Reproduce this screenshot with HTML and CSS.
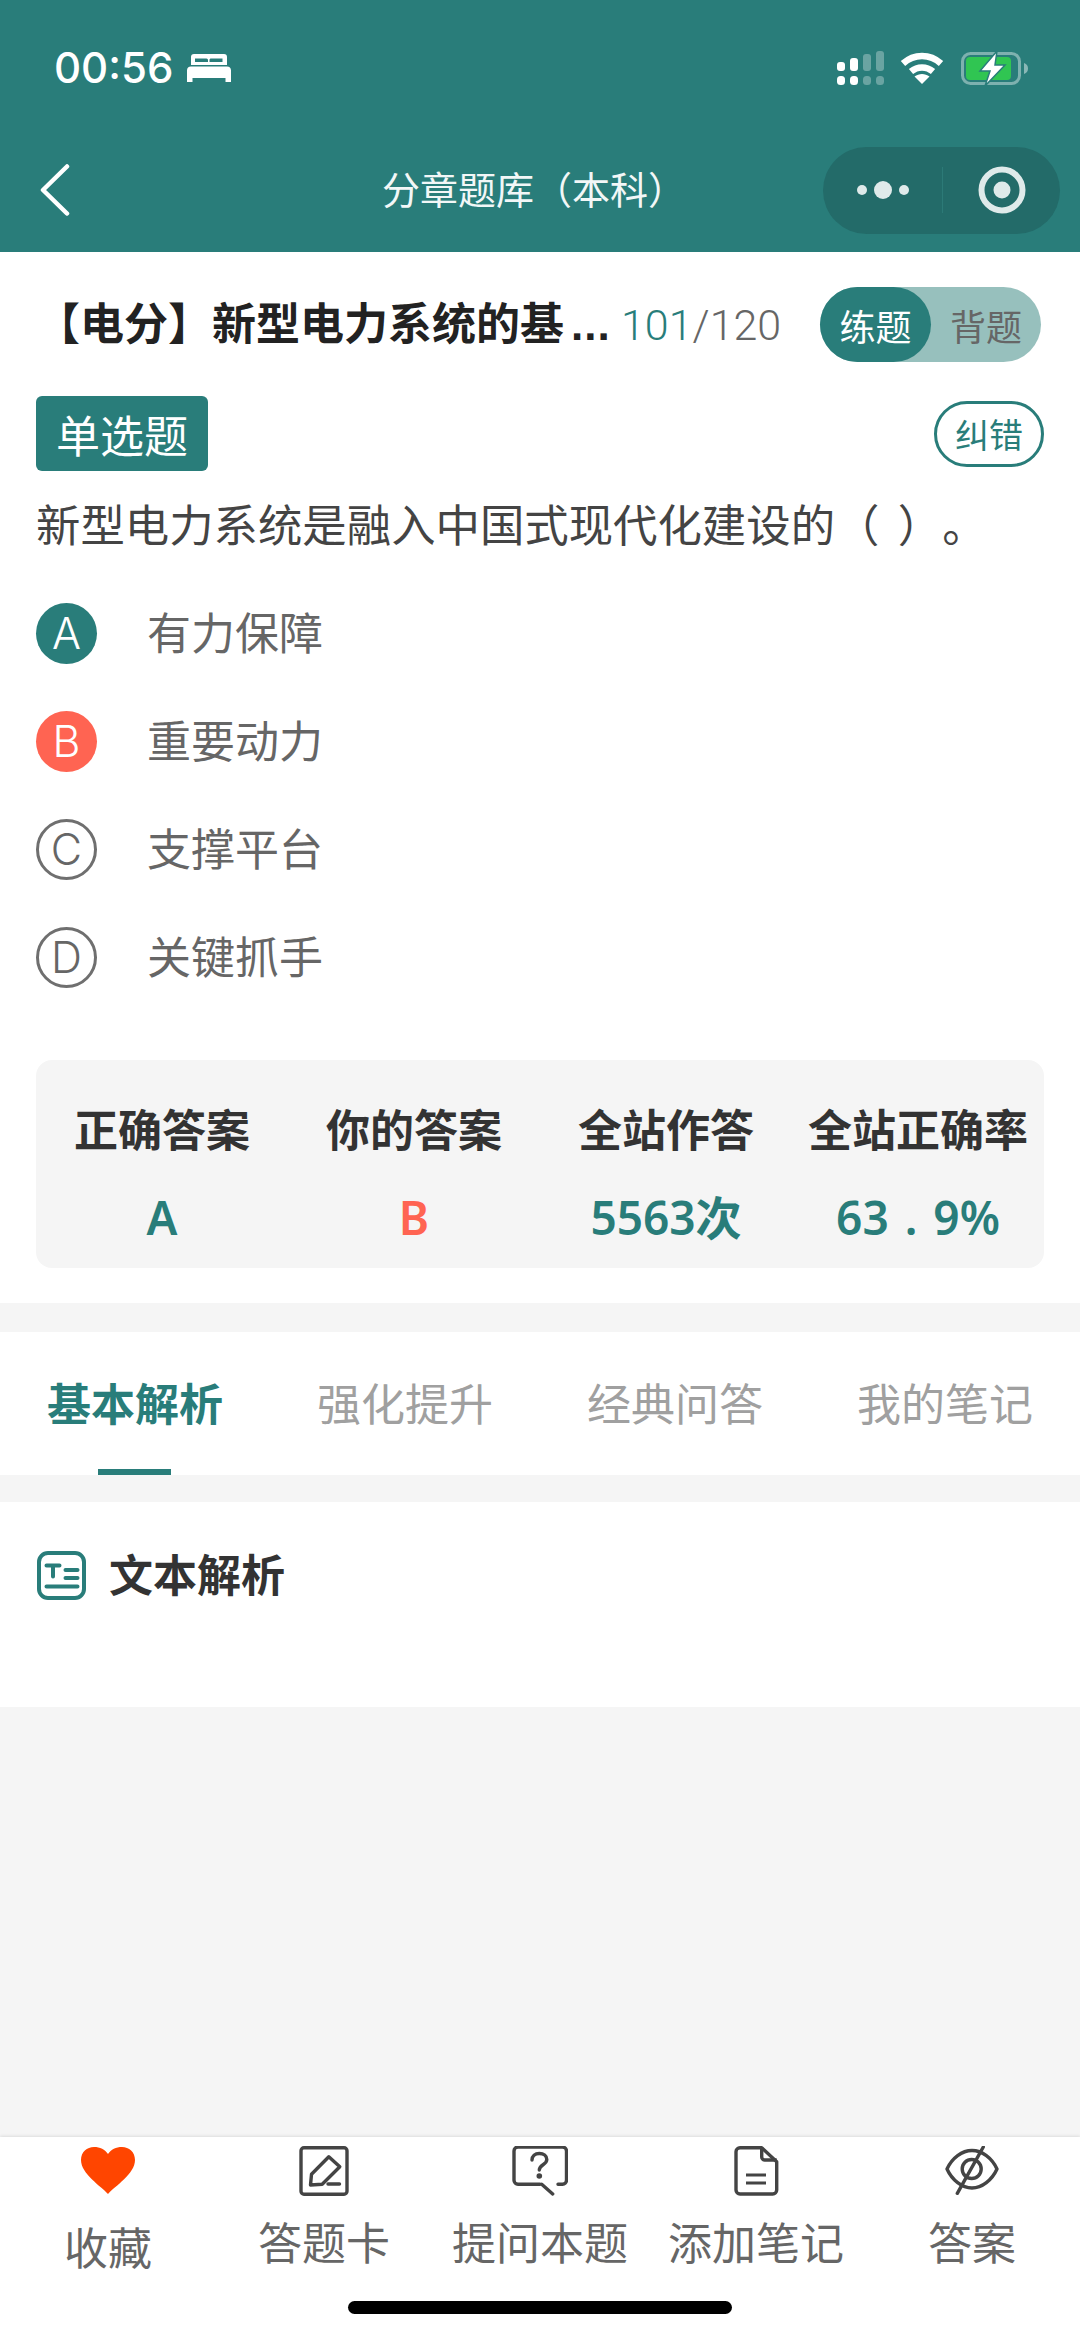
FILE: index.html
```html
<!DOCTYPE html>
<html lang="zh-CN">
<head>
<meta charset="utf-8">
<title>分章题库（本科）</title>
<link rel="stylesheet" href="styles.css">
</head>
<body>
<div class="page">
  <header class="header">
    <div class="status">
      <div class="status-left">
        <span class="time">00:56</span>
        <svg class="bed" viewBox="0 0 44 28"><path fill="#fff" fill-rule="evenodd" d="M7 0h30a3 3 0 0 1 3 3v8H4V3a3 3 0 0 1 3-3zM8 4.500v3.500h13V6a1.500 1.500 0 0 0-1.500-1.500zM23.500 4.500A1.500 1.500 0 0 0 22.500 6v2h13V4.500z"/><path fill="#fff" d="M4 12.500h36c2.500 0 4 1.500 4 4V28h-5.500v-4h-33v4H0V16.500c0-2.500 1.500-4 4-4z"/></svg>
      </div>
      <div class="status-right">
        <svg class="signal" viewBox="0 0 48 34">
          <g fill="#fff"><rect x="0" y="11" width="8" height="9" rx="3"/><rect x="13" y="7" width="8" height="13" rx="3"/><rect x="0" y="25" width="8" height="9" rx="3.500"/><rect x="13" y="25" width="8" height="9" rx="3.500"/></g>
          <g fill="#fff" opacity=".3"><rect x="26" y="3" width="8" height="17" rx="3"/><rect x="39" y="0" width="8" height="20" rx="3"/><rect x="26" y="25" width="8" height="9" rx="3.500"/><rect x="39" y="25" width="8" height="9" rx="3.500"/></g>
        </svg>
        <svg class="wifi" viewBox="0 0 44 32"><g fill="none" stroke="#fff" stroke-width="6.500"><path d="M3 11.500C14 1.500 30 1.500 41 11.500"/><path d="M11 19.500C17.500 14 26.500 14 33 19.500"/></g><path fill="#fff" d="M22 32l-7.500-7.500c4.500-3.500 10.500-3.500 15 0z"/></svg>
        <svg class="battery" viewBox="0 0 68 35">
          <rect x="1.500" y="2.500" width="57" height="30" rx="8" fill="none" stroke="#fff" stroke-opacity=".4" stroke-width="3"/>
          <path d="M63 12c3 1 4 3 4 5.500S66 22 63 23z" fill="#fff" opacity=".45"/>
          <rect x="5" y="6" width="45" height="23" rx="4" fill="#30c552"/>
          <path fill="#fff" stroke="#297d7a" stroke-width="1.500" d="M36 0L19 20h10l-5 15 20-21H34z"/>
        </svg>
      </div>
    </div>
    <div class="nav">
      <svg class="back" viewBox="0 0 30 52"><path fill="none" stroke="#fff" stroke-width="4.500" stroke-linecap="round" stroke-linejoin="round" d="M27 2.500L3 26l24 23.500"/></svg>
      <h1 class="nav-title">分章题库（本科）</h1>
      <div class="capsule">
        <svg class="dots" viewBox="0 0 52 20"><circle cx="5" cy="10" r="5" fill="#dfeaea"/><circle cx="26" cy="10" r="9" fill="#dfeaea"/><circle cx="47" cy="10" r="5" fill="#dfeaea"/></svg>
        <span class="capsule-line"></span>
        <svg class="target" viewBox="0 0 48 48"><circle cx="24" cy="24" r="20.500" fill="none" stroke="#dfeaea" stroke-width="6"/><circle cx="24" cy="24" r="8.500" fill="#dfeaea"/></svg>
      </div>
    </div>
  </header>

  <section class="quiz">
    <div class="title-row">
      <h2 class="book">【电分】新型电力系统的基<span class="book-more">...</span></h2>
      <p class="count"><span class="count-now">101</span>/120</p>
      <div class="mode">
        <span class="mode-on">练题</span>
        <span class="mode-off">背题</span>
      </div>
    </div>
    <div class="type-row">
      <span class="type">单选题</span>
      <span class="fix">纠错</span>
    </div>
    <p class="question">新型电力系统是融入中国式现代化建设的（ ）。</p>
    <ul class="options">
      <li class="option"><span class="mark mark-right">A</span><span class="option-text">有力保障</span></li>
      <li class="option"><span class="mark mark-wrong">B</span><span class="option-text">重要动力</span></li>
      <li class="option"><span class="mark">C</span><span class="option-text">支撑平台</span></li>
      <li class="option"><span class="mark">D</span><span class="option-text">关键抓手</span></li>
    </ul>
    <div class="stats">
      <div class="stat"><b class="stat-head">正确答案</b><span class="stat-val">A</span></div>
      <div class="stat"><b class="stat-head">你的答案</b><span class="stat-val stat-bad">B</span></div>
      <div class="stat"><b class="stat-head">全站作答</b><span class="stat-val">5563次</span></div>
      <div class="stat"><b class="stat-head">全站正确率</b><span class="stat-val stat-rate">63 . 9%</span></div>
    </div>
  </section>

  <nav class="tabs">
    <span class="tab tab-on">基本解析</span>
    <span class="tab">强化提升</span>
    <span class="tab">经典问答</span>
    <span class="tab">我的笔记</span>
  </nav>

  <section class="analysis">
    <svg class="text-icon" viewBox="0 0 49 49">
      <rect x="2" y="2" width="45" height="45" rx="9" fill="none" stroke="#297d7a" stroke-width="4"/>
      <path fill="none" stroke="#297d7a" stroke-width="4" stroke-linecap="round" d="M9.500 14.500h13M16 14.500v11M28.500 19h12M28.500 27h12M9.500 35.500h31"/>
    </svg>
    <h3 class="analysis-title">文本解析</h3>
  </section>

  <main class="filler"></main>

  <footer class="bar">
    <div class="bar-items">
      <div class="item">
        <svg class="item-icon" viewBox="0 0 56 50"><path fill="#ff4500" d="M28 48C21 40 1 28 1 14 1 6 7 1 14 1 20 1 25 3.500 28 8c3-4.500 8-7 14-7 7 0 13 5 13 13 0 14-20 26-27 34z"/></svg>
        <span class="item-label item-label-low">收藏</span>
      </div>
      <div class="item">
        <svg class="item-icon" viewBox="0 0 56 50"><g fill="none" stroke="#444" stroke-width="3.400" stroke-linejoin="round"><rect x="5" y="1.700" width="46" height="46.600" rx="3"/><path d="M15.500 28.300L32.800 10.700 43.800 20.700 26.200 38.300 14.500 39z"/><path d="M32 38h11.500" stroke-linecap="round"/></g></svg>
        <span class="item-label">答题卡</span>
      </div>
      <div class="item">
        <svg class="item-icon" viewBox="0 0 56 50"><g fill="none" stroke="#444" stroke-width="3.400" stroke-linecap="round" stroke-linejoin="round"><path d="M28 38.300H6a4 4 0 0 1-4-4V5a4 4 0 0 1 4-4h44.500a4 4 0 0 1 4 4v29.300a4 4 0 0 1-4 4h-4.500"/><path d="M29.700 38.300L40.700 48"/><path d="M20 14c0-4 3-6.500 7.300-6.500s7.500 2.500 7.500 6c0 5.500-7.500 5-7.500 10.500"/></g><circle cx="27.300" cy="30" r="2.800" fill="#444"/></svg>
        <span class="item-label">提问本题</span>
      </div>
      <div class="item">
        <svg class="item-icon" viewBox="0 0 56 50"><g fill="none" stroke="#444" stroke-width="3.400" stroke-linejoin="round"><path d="M12 1.700h21.700l15 14V44a4 4 0 0 1-4 4H12a4 4 0 0 1-4-4V5.700a4 4 0 0 1 4-4z"/><path d="M33.700 1.700V11a3 3 0 0 0 3 3h12"/><path d="M18 29h20M18 37h20" stroke-width="3"/></g></svg>
        <span class="item-label">添加笔记</span>
      </div>
      <div class="item">
        <svg class="item-icon" viewBox="0 0 56 50"><g fill="none" stroke="#444" stroke-width="3.400" stroke-linejoin="round"><path d="M3 23C8 12 18 4.500 28 4.500S48 12 53 23C48 34 38 42 28 42S8 34 3 23z"/><circle cx="27.700" cy="23" r="9.500"/><path d="M39.300 1L13.300 47.300" stroke-linecap="round"/></g></svg>
        <span class="item-label">答案</span>
      </div>
    </div>
    <div class="home"></div>
  </footer>
</div>
</body>
</html>
```
FILE: styles.css
```css
* { box-sizing: border-box; }
html, body { margin: 0; padding: 0; }
body {
  width: 1080px;
  font-family: "Liberation Sans", "Noto Sans CJK SC", sans-serif;
  color: #333;
  text-spacing-trim: space-all;
}
h1, h2, h3, p, ul { margin: 0; padding: 0; }
ul { list-style: none; }

.page {
  display: flex;
  flex-direction: column;
  width: 1080px;
  height: 2337px;
  overflow: hidden;
  background: #f5f5f5;
}

/* header */
.header { height: 252px; background: #297d7a; color: #fff; }
.status {
  display: flex;
  justify-content: space-between;
  align-items: center;
  height: 136px;
  padding: 0 51px 0 54px;
}
.status-left { display: flex; align-items: center; gap: 14px; }
.time {
  font-family: Inter, "Liberation Sans", sans-serif;
  font-size: 42px;
  font-weight: 500;
  line-height: 1;
}
.bed { width: 44px; height: 28px; }
.status-right { display: flex; align-items: center; }
.signal { width: 48px; height: 34px; }
.wifi { width: 44px; height: 32px; margin-left: 15px; }
.battery { width: 68px; height: 35px; margin-left: 17px; }

.nav {
  display: flex;
  align-items: center;
  height: 110px;
  margin-top: -1px;
  padding: 0 20px 0 40px;
}
.back { width: 30px; height: 52px; }
.nav-title {
  flex: 1;
  padding: 2px 0 0 175px;
  text-align: center;
  font-size: 38px;
  font-weight: 400;
  line-height: 1;
  color: #f2f7f7;
}
.capsule {
  display: flex;
  align-items: center;
  width: 237px;
  height: 87px;
  padding-left: 34px;
  border-radius: 44px;
  background: #236b69;
}
.dots { width: 52px; height: 20px; }
.capsule-line { width: 1px; height: 46px; margin-left: 33px; background: #2c7a77; }
.target { width: 48px; height: 48px; margin-left: 35px; }

/* question */
.quiz { padding: 35px 36px 35px; background: #fff; }
.title-row { display: flex; align-items: center; height: 75px; }
.book {
  flex: none;
  width: 585px;
  font-size: 44px;
  font-weight: 700;
  line-height: 60px;
  white-space: nowrap;
  color: #222;
}
.book-more { margin-left: 7px; letter-spacing: 1px; }
.count {
  font-family: Roboto, "Liberation Sans", sans-serif;
  font-size: 43px;
  font-weight: 300;
  color: #666;
}
.count-now { color: #297d7a; }
.mode {
  display: flex;
  align-items: center;
  width: 221px;
  height: 75px;
  margin-left: auto;
  margin-right: 3px;
  border-radius: 38px;
  background: #97c0bd;
  font-size: 36px;
}
.mode-on {
  display: flex;
  align-items: center;
  justify-content: center;
  width: 111px;
  height: 75px;
  border-radius: 38px;
  background: #297d7a;
  color: #fff;
}
.mode-off { flex: 1; text-align: center; color: #666; }

.type-row {
  display: flex;
  justify-content: space-between;
  align-items: center;
  height: 75px;
  margin-top: 34px;
}
.type {
  display: flex;
  align-items: center;
  justify-content: center;
  width: 172px;
  height: 75px;
  border-radius: 6px;
  background: #297d7a;
  color: #fff;
  font-size: 44px;
}
.fix {
  display: flex;
  align-items: center;
  justify-content: center;
  width: 110px;
  height: 66px;
  border: 3px solid #297d7a;
  border-radius: 33px;
  color: #297d7a;
  font-size: 34px;
}
.question {
  margin-top: 26px;
  font-size: 44.4px;
  line-height: 60px;
  word-spacing: 6px;
  color: #444;
  white-space: nowrap;
}
.options { margin-top: 22px; }
.option {
  display: flex;
  align-items: center;
  height: 108px;
  font-size: 44px;
  color: #666;
}
.option-text { padding-bottom: 4px; margin-left: -1px; }
.mark {
  display: flex;
  align-items: center;
  justify-content: center;
  width: 61px;
  height: 61px;
  margin-right: 51px;
  border: 3px solid #6f6f6f;
  border-radius: 50%;
  font-family: Inter, "Liberation Sans", sans-serif;
  font-size: 43px;
  font-weight: 300;
  color: #666;
}
.mark-right { border: 0; background: #297d7a; color: #fff; }
.mark-wrong { border: 0; background: #ff6452; color: #fff; }

.stats {
  display: grid;
  grid-template-columns: repeat(4, 1fr);
  height: 208px;
  margin-top: 49px;
  padding-top: 42px;
  border-radius: 16px;
  background: #f5f5f5;
}
.stat { display: flex; flex-direction: column; align-items: center; gap: 25px; }
.stat-head { font-size: 44px; line-height: 60px; color: #333; white-space: nowrap; }
.stat-val {
  font-family: "Noto Sans", "Noto Sans CJK SC", sans-serif;
  font-size: 46px;
  font-weight: 600;
  line-height: 60px;
  color: #297d7a;
  white-space: nowrap;
}
.stat-rate { word-spacing: 4px; }
.stat-bad { color: #ff6452; }

/* tabs */
.tabs {
  display: grid;
  grid-template-columns: repeat(4, 1fr);
  height: 143px;
  margin-top: 29px;
  background: #fff;
}
.tab {
  position: relative;
  padding-top: 44px;
  text-align: center;
  font-size: 44px;
  line-height: 60px;
  color: #a0a0a0;
}
.tab-on { font-weight: 700; color: #297d7a; }
.tab-on::after {
  content: "";
  position: absolute;
  left: 98px;
  bottom: 0;
  width: 73px;
  height: 6px;
  background: #297d7a;
}

.analysis {
  display: flex;
  align-items: flex-start;
  gap: 23px;
  height: 205px;
  margin-top: 27px;
  padding: 49px 37px 0;
  background: #fff;
}
.text-icon { width: 49px; height: 49px; }
.analysis-title { font-size: 44px; font-weight: 700; line-height: 52px; color: #333; }

.filler { flex: 1; }

/* bottom bar */
.bar {
  height: 200px;
  background: #fff;
  box-shadow: 0 -1px 3px rgba(0, 0, 0, .1);
}
.bar-items {
  display: grid;
  grid-template-columns: repeat(5, 216px);
  padding-top: 9px;
}
.item { display: flex; flex-direction: column; align-items: center; }
.item-icon { width: 56px; height: 50px; }
.item-label { margin-top: 19px; font-size: 44px; line-height: 60px; color: #666; white-space: nowrap; }
.item-label-low { margin-top: 24px; }
.home {
  width: 384px;
  height: 13px;
  margin: 21px auto 0;
  border-radius: 7px;
  background: #000;
}
```
